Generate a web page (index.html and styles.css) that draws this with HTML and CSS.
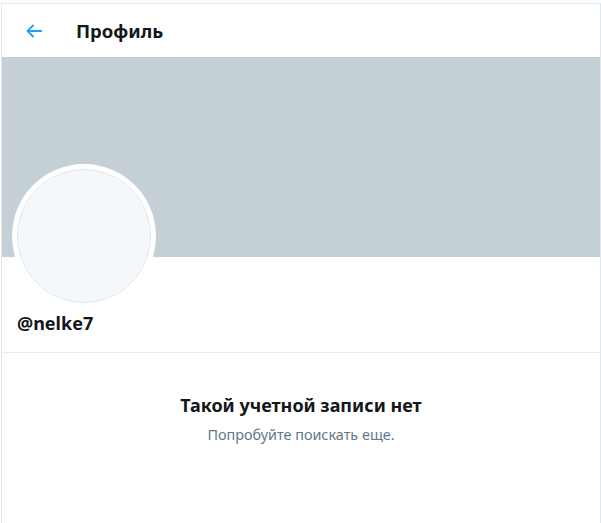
FILE: index.html
```html
<!DOCTYPE html>
<html lang="ru">
<head>
<meta charset="utf-8">
<link rel="stylesheet" href="styles.css">
</head>
<body>
<div class="page">
  <header class="topbar">
    <span class="back">
      <svg viewBox="0 0 24 24" width="22" height="22"><path d="M20 11H7.414l4.293-4.293a1 1 0 0 0-1.414-1.414l-6 6a1 1 0 0 0 0 1.414l6 6a1 1 0 0 0 1.414-1.414L7.414 13H20a1 1 0 1 0 0-2z" fill="#1da1f2"/></svg>
    </span>
    <h1 class="title">Профиль</h1>
  </header>
  <div class="banner"></div>
  <div class="profile">
    <div class="avatar"><div class="avatar-inner"></div></div>
    <div class="handle">@nelke7</div>
  </div>
  <div class="empty">
    <div class="empty-title">Такой учетной записи нет</div>
    <div class="empty-sub">Попробуйте поискать еще.</div>
  </div>
</div>
</body>
</html>
```
FILE: styles.css
```css
html, body {
  margin: 0;
  padding: 0;
  background: #fff;
}
body {
  font-family: "Noto Sans", "Open Sans", sans-serif;
  color: #14171a;
}
.page {
  margin-top: 3px;
  margin-left: 1px;
  width: 600px;
  height: 540px;
  border: 1px solid #e1e6ea;
  border-bottom: none;
  box-sizing: border-box;
}
.topbar {
  height: 53px;
  display: flex;
  align-items: center;
  padding-left: 21px;
}
.back {
  width: 22px;
  height: 22px;
  display: flex;
  margin-right: 31px;
}
.title {
  margin: 0;
  font-size: 18.5px;
  font-weight: 700;
  line-height: 24px;
}
.banner {
  height: 200px;
  background: #c4cfd6;
}
.profile {
  position: relative;
  height: 95px;
  padding: 0 15px;
  border-bottom: 1px solid #e6ecf0;
}
.avatar {
  position: absolute;
  left: 10px;
  top: -93px;
  width: 144px;
  height: 144px;
  border-radius: 50%;
  background: #fff;
  display: flex;
  align-items: center;
  justify-content: center;
}
.avatar-inner {
  width: 134px;
  height: 134px;
  box-sizing: border-box;
  border-radius: 50%;
  border: 1px solid #e1e8ed;
  background: #f5f8fa;
}
.handle {
  padding-top: 54px;
  font-size: 18px;
  font-weight: 700;
  line-height: 24px;
}
.empty {
  display: flex;
  flex-direction: column;
  align-items: center;
  padding-top: 40px;
}
.empty-title {
  font-size: 18px;
  font-weight: 700;
  line-height: 24px;
}
.empty-sub {
  margin-top: 9px;
  font-size: 14.4px;
  color: #657786;
  line-height: 18px;
}
```
